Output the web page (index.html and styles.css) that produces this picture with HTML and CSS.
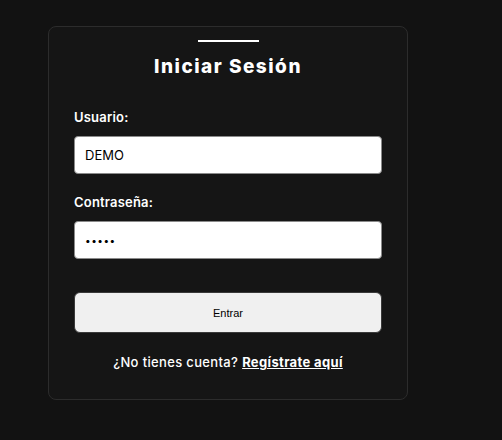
FILE: index.html
```html
<!DOCTYPE html>
<html lang="es">
<head>
<meta charset="utf-8">
<title>Iniciar Sesión</title>
<link rel="stylesheet" href="styles.css">
</head>
<body>
  <div class="card">
    <div class="rule"></div>
    <h1 class="title">Iniciar Sesión</h1>
    <form class="form">
      <label class="label label-first" for="user">Usuario:</label>
      <input class="field" id="user" type="text" value="DEMO">
      <label class="label" for="pass">Contraseña:</label>
      <input class="field field-pass" id="pass" type="password" value="12345">
      <button class="submit" type="button">Entrar</button>
    </form>
    <p class="footer">¿No tienes cuenta? <a class="link" href="#">Regístrate aquí</a></p>
  </div>
</body>
</html>
```

FILE: styles.css
```css
html, body {
  margin: 0;
  padding: 0;
  background: #121212;
}

body {
  font-family: "Inter", "Noto Sans", sans-serif;
  color: #ffffff;
}

.card {
  box-sizing: border-box;
  width: 360px;
  height: 374px;
  margin: 26px 0 0 48px;
  padding: 13px 25px 0;
  background: #151515;
  border: 1px solid #2c2c2c;
  border-radius: 8px;
}

.rule {
  width: 61px;
  height: 2px;
  margin: 0 auto;
  background: #ffffff;
}

.title {
  margin: 13px 0 0;
  font-size: 19px;
  line-height: 24px;
  font-weight: 800;
  letter-spacing: 1.5px;
  text-align: center;
}

.form {
  display: flex;
  flex-direction: column;
}

.label {
  margin-top: 19px;
  font-size: 13px;
  line-height: 18px;
  font-weight: 600;
  letter-spacing: 0.2px;
}

.label-first {
  margin-top: 29px;
}

.field {
  box-sizing: border-box;
  height: 38px;
  margin-top: 10px;
  padding: 0 10px;
  background: #ffffff;
  border: 1px solid #8a8a8a;
  border-radius: 4px;
  font-family: "Inter", "Noto Sans", sans-serif;
  font-size: 13px;
  color: #000000;
  outline: none;
}

.field-pass {
  font-size: 10px;
  letter-spacing: 0.5px;
}

.submit {
  box-sizing: border-box;
  height: 41px;
  margin-top: 33px;
  background: #f0f0f0;
  border: 1px solid #3a3a3a;
  border-radius: 6px;
  font-family: "Liberation Sans", Arial, sans-serif;
  font-size: 11px;
  color: #000000;
}

.footer {
  margin: 20px 0 0;
  font-size: 13px;
  line-height: 18px;
  font-weight: 500;
  letter-spacing: 0.35px;
  text-align: center;
}

.link {
  color: #ffffff;
  font-weight: 700;
  text-decoration: underline;
}
```
